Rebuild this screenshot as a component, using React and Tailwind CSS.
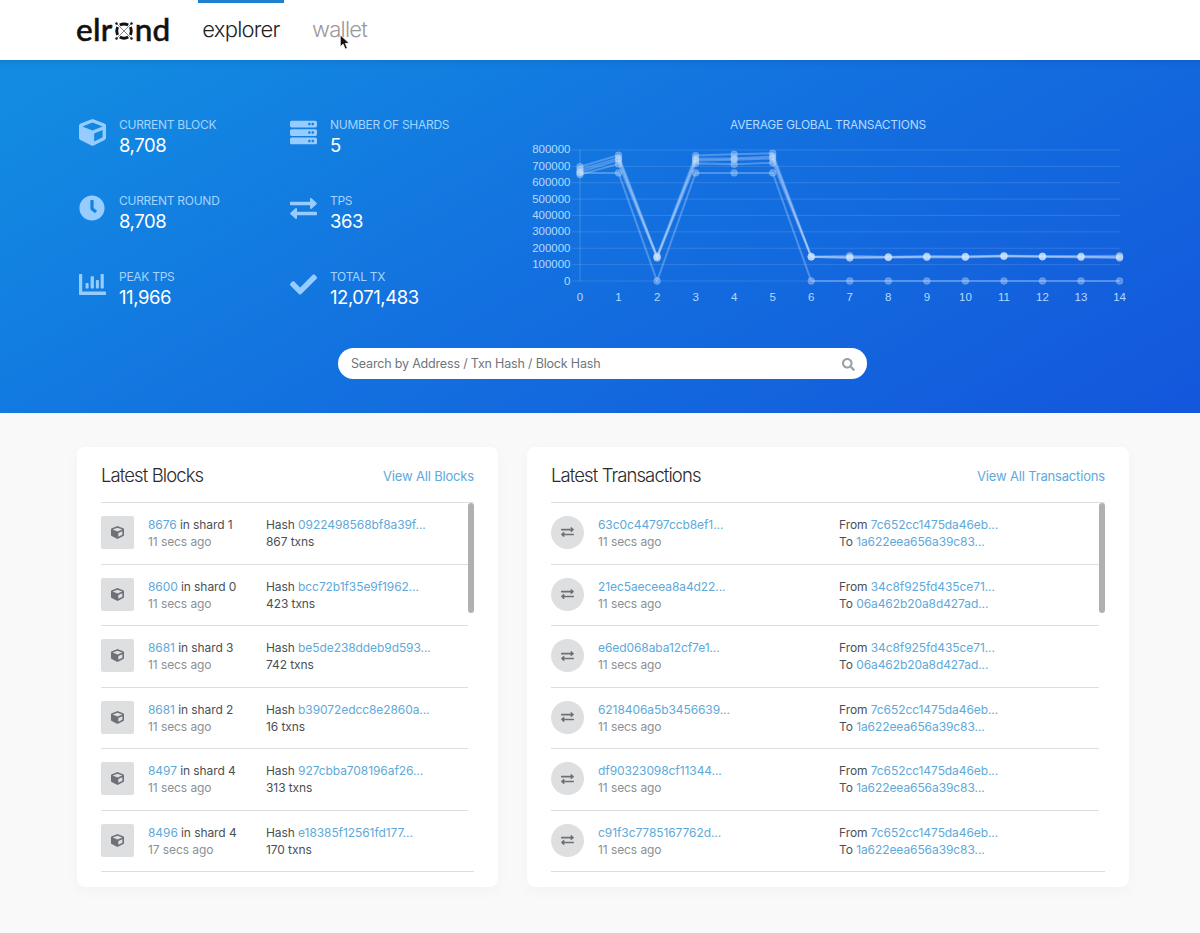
import { FaCube, FaClock, FaServer, FaCheck, FaSearch } from 'react-icons/fa';

const blocks = [
  { id: '8676', shard: 1, age: '11 secs ago', hash: '0922498568bf8a39f...', txns: 867 },
  { id: '8600', shard: 0, age: '11 secs ago', hash: 'bcc72b1f35e9f1962...', txns: 423 },
  { id: '8681', shard: 3, age: '11 secs ago', hash: 'be5de238ddeb9d593...', txns: 742 },
  { id: '8681', shard: 2, age: '11 secs ago', hash: 'b39072edcc8e2860a...', txns: 16 },
  { id: '8497', shard: 4, age: '11 secs ago', hash: '927cbba708196af26...', txns: 313 },
  { id: '8496', shard: 4, age: '17 secs ago', hash: 'e18385f12561fd177...', txns: 170 },
];

const transactions = [
  { hash: '63c0c44797ccb8ef1...', from: '7c652cc1475da46eb...', to: '1a622eea656a39c83...' },
  { hash: '21ec5aeceea8a4d22...', from: '34c8f925fd435ce71...', to: '06a462b20a8d427ad...' },
  { hash: 'e6ed068aba12cf7e1...', from: '34c8f925fd435ce71...', to: '06a462b20a8d427ad...' },
  { hash: '6218406a5b3456639...', from: '7c652cc1475da46eb...', to: '1a622eea656a39c83...' },
  { hash: 'df90323098cf11344...', from: '7c652cc1475da46eb...', to: '1a622eea656a39c83...' },
  { hash: 'c91f3c7785167762d...', from: '7c652cc1475da46eb...', to: '1a622eea656a39c83...' },
];

// transactions per round, in thousands, one line per shard
const series = [
  [698, 768, 152, 766, 774, 780, 150, 154, 148, 152, 150, 155, 152, 152, 154],
  [680, 750, 148, 747, 750, 760, 148, 146, 146, 148, 148, 152, 150, 148, 148],
  [665, 738, 144, 736, 740, 748, 148, 142, 144, 148, 148, 152, 148, 148, 144],
  [650, 715, 140, 718, 712, 722, 146, 140, 144, 144, 144, 150, 148, 144, 140],
  [660, 660, 0, 660, 660, 660, 0, 0, 0, 0, 0, 0, 0, 0, 0],
];

const ExchangeIcon = ({ className }) => (
  <svg viewBox="0 0 27 21" className={className} fill="currentColor">
    <path d="M1 3.800h19V1.100c0-1 1.100-1.400 1.800-.7l4.700 4.300c.5.500.5 1.200 0 1.600l-4.700 4.300c-.7.700-1.800.2-1.800-.7V7.200H1c-.6 0-1-.4-1-1V4.800c0-.6.4-1 1-1z" />
    <path d="M26 13.800H7v-2.700c0-1-1.100-1.400-1.800-.7L.5 14.700c-.5.500-.5 1.200 0 1.600l4.700 4.300c.7.700 1.800.2 1.800-.7v-2.700h19c.6 0 1-.4 1-1v-1.400c0-.6-.4-1-1-1z" />
  </svg>
);

const ChartBarIcon = ({ className }) => (
  <svg viewBox="0 0 27 21" className={className} fill="currentColor">
    <path d="M1 0h1.200c.6 0 1 .4 1 1v16.500H26c.6 0 1 .4 1 1V20c0 .6-.4 1-1 1H1c-.6 0-1-.4-1-1V1c0-.6.400-1 1-1z" />
    <rect x="6.600" y="9" width="3" height="5.500" rx=".8" />
    <rect x="11.600" y="2.200" width="3.300" height="12.300" rx=".8" />
    <rect x="16.900" y="6" width="3" height="8.500" rx=".8" />
    <rect x="21.600" y="0" width="3.200" height="14.500" rx=".8" />
  </svg>
);

const Logo = () => (
  <div className="flex items-baseline font-['Lato'] text-[31.5px] leading-8 font-medium tracking-[0.3px] text-[#111] [-webkit-text-stroke:0.5px_#111]">
    <span>elr</span>
    <svg viewBox="0 0 20 20" className="ml-px mr-px -mb-px h-5 w-5" fill="none" stroke="currentColor">
      <path d="M5.800 4Q10 1.800 14.200 4M5.800 16Q10 18.400 14.200 16" strokeWidth="3" />
      <path d="M3.500 6Q1.900 10 3.500 14M16.500 6Q18.100 10 16.500 14" strokeWidth="2.900" />
      <path d="M3 3l14 14M17 3L3 17" strokeWidth=".5" />
      <g fill="currentColor" stroke="none">
        <circle cx="2.500" cy="2.500" r="1.200" />
        <circle cx="17.500" cy="2.500" r="1.200" />
        <circle cx="2.500" cy="17.500" r="1.200" />
        <circle cx="17.500" cy="17.500" r="1.200" />
      </g>
    </svg>
    <span>nd</span>
  </div>
);

const Stat = ({ icon, label, value }) => (
  <div className="flex h-[76px]">
    <div className="flex h-[30px] w-10 items-center pt-0.5 text-[#96ccff]">{icon}</div>
    <div>
      <div className="text-xs leading-[18px] tracking-[-0.27px] text-[#a4d4ff]">{label}</div>
      <div className="text-[18.5px] leading-[22px] tracking-[-0.45px] text-white">{value}</div>
    </div>
  </div>
);

const px = (i) => 50 + i * 38.54;
const py = (v) => 141 - v * 0.1638;

const Chart = () => (
  <svg viewBox="0 0 610 180" className="h-[180px] w-[610px] font-['Liberation_Sans',sans-serif]">
    {[0, 100, 200, 300, 400, 500, 600, 700, 800].map((v) => (
      <g key={v}>
        <line x1="42" x2="590" y1={py(v)} y2={py(v)} stroke="#fff" strokeOpacity=".13" />
        <text x="40.500" y={py(v) + 3.500} textAnchor="end" fontSize="11.500" fill="#b5daff">
          {v * 1000}
        </text>
      </g>
    ))}
    <line x1="50" x2="50" y1="10" y2="141" stroke="#fff" strokeOpacity=".18" />
    {series[0].map((_, i) => (
      <text key={i} x={px(i)} y="161" textAnchor="middle" fontSize="11.500" fill="#b5daff">
        {i}
      </text>
    ))}
    {series.map((line, s) => (
      <g key={s}>
        <polyline
          points={line.map((v, i) => `${px(i)},${py(v)}`).join(' ')}
          fill="none"
          stroke="#c5deff"
          strokeOpacity=".33"
          strokeWidth="2"
        />
        {line.map((v, i) => (
          <circle key={i} cx={px(i)} cy={py(v)} r="3.400" fill="#d5e8ff" fillOpacity=".36" stroke="#d5e8ff" strokeOpacity=".2" />
        ))}
      </g>
    ))}
  </svg>
);

const Card = ({ title, link, className, children }) => (
  <section className={`h-[440px] rounded-lg bg-white px-6 shadow-[0_4px_16px_rgba(0,0,0,0.03)] ${className}`}>
    <div className="flex h-[55px] items-center justify-between pt-[3px]">
      <h2 className="text-[18.5px] font-light tracking-[-0.9px] text-[#2b2b2b]">{title}</h2>
      <a className="pt-0.5 text-[13px] tracking-[-0.17px] text-[#5ea9d9]">{link}</a>
    </div>
    <div className="flex h-[370px] justify-between border-y border-[#dedede]">
      <div className="flex-1">{children}</div>
      <div className="h-[110px] w-1.5 rounded-full bg-[#b0b0b0]" />
    </div>
  </section>
);

const Row = ({ children }) => (
  <div className="flex h-[61.6px] items-start border-b border-[#dedede] pt-[13px] text-xs leading-[17px] tracking-[-0.08px] text-[#4a4f55] last:border-0">
    {children}
  </div>
);

const Link = ({ children }) => <a className="text-[#5ea9d9]">{children}</a>;

export default function App() {
  return (
    <div className="h-[933px] overflow-hidden bg-[#f9f9f9] font-['Inter',sans-serif]">
      <header className="relative flex h-[60px] bg-white pl-[76px]">
        <div className="w-[122px] pt-[13px]">
          <Logo />
        </div>
        <nav className="flex text-[22px] font-light leading-7">
          <a className="w-[86px] border-t-3 border-[#1f80d0] pt-3 text-center tracking-[-0.75px] text-[#222]">explorer</a>
          <a className="ml-7 pt-[15px] tracking-[-0.75px] text-[#999]">wallet</a>
        </nav>
        <svg viewBox="0 0 12 18" className="absolute left-[339px] top-[34px] h-[17px] w-3">
          <path d="M1 1v12.500l3-2.800 2.200 5.300 2.300-1-2.200-5.100H10.500z" fill="#111" stroke="#fff" strokeWidth=".8" />
        </svg>
      </header>

      <div className="h-[353px] bg-linear-[150deg] from-[#128be2] from-5% via-[#1370df] via-50% to-[#1357dc] shadow-[inset_0_8px_6px_-6px_rgba(0,0,0,0.1)]">
        <div className="flex h-[288px] pl-[79px] pt-[56px]">
          <div className="w-[211px]">
            <Stat icon={<FaCube className="size-[27px]" />} label="CURRENT BLOCK" value="8,708" />
            <Stat icon={<FaClock className="size-[26px]" />} label="CURRENT ROUND" value="8,708" />
            <Stat icon={<ChartBarIcon className="w-[27px]" />} label="PEAK TPS" value="11,966" />
          </div>
          <div className="w-[240px]">
            <Stat icon={<FaServer className="size-[27px]" />} label="NUMBER OF SHARDS" value="5" />
            <Stat icon={<ExchangeIcon className="w-[27px]" />} label="TPS" value="363" />
            <Stat icon={<FaCheck className="size-[27px]" />} label="TOTAL TX" value="12,071,483" />
          </div>
          <div>
            <div className="h-6 pl-[200px] text-xs leading-[18px] tracking-[-0.26px] text-[#b5daff]">AVERAGE GLOBAL TRANSACTIONS</div>
            <Chart />
          </div>
        </div>
        <div className="ml-[338px] flex h-[31px] w-[529px] items-center justify-between rounded-full bg-white pl-[13px] pr-3 text-[#6f757b]">
          <span className="pt-px text-[12.500px] tracking-[-0.18px]">Search by Address / Txn Hash / Block Hash</span>
          <FaSearch className="mt-0.5 size-[13px] text-[#999fa5]" />
        </div>
      </div>

      <main className="flex gap-[29px] pl-[77px] pt-[34px]">
        <Card title="Latest Blocks" link="View All Blocks" className="w-[421px]">
          {blocks.map((b) => (
            <Row key={b.hash}>
              <div className="flex size-[33px] items-center justify-center rounded-xs bg-[#dedfe0] text-[#6c7177]">
                <FaCube className="size-[13px]" />
              </div>
              <div className="ml-[14px] w-[118px]">
                <div>
                  <Link>{b.id}</Link> in shard {b.shard}
                </div>
                <div className="text-[#8b9095]">{b.age}</div>
              </div>
              <div>
                <div>
                  Hash <Link>{b.hash}</Link>
                </div>
                <div>{b.txns} txns</div>
              </div>
            </Row>
          ))}
        </Card>
        <Card title="Latest Transactions" link="View All Transactions" className="w-[602px]">
          {transactions.map((t) => (
            <Row key={t.hash}>
              <div className="flex size-[33px] items-center justify-center rounded-full bg-[#dedfe0] text-[#6c7177]">
                <ExchangeIcon className="w-[13px]" />
              </div>
              <div className="ml-[14px] w-[241px]">
                <Link>{t.hash}</Link>
                <div className="text-[#8b9095]">11 secs ago</div>
              </div>
              <div>
                <div>
                  From <Link>{t.from}</Link>
                </div>
                <div>
                  To <Link>{t.to}</Link>
                </div>
              </div>
            </Row>
          ))}
        </Card>
      </main>
    </div>
  );
}
